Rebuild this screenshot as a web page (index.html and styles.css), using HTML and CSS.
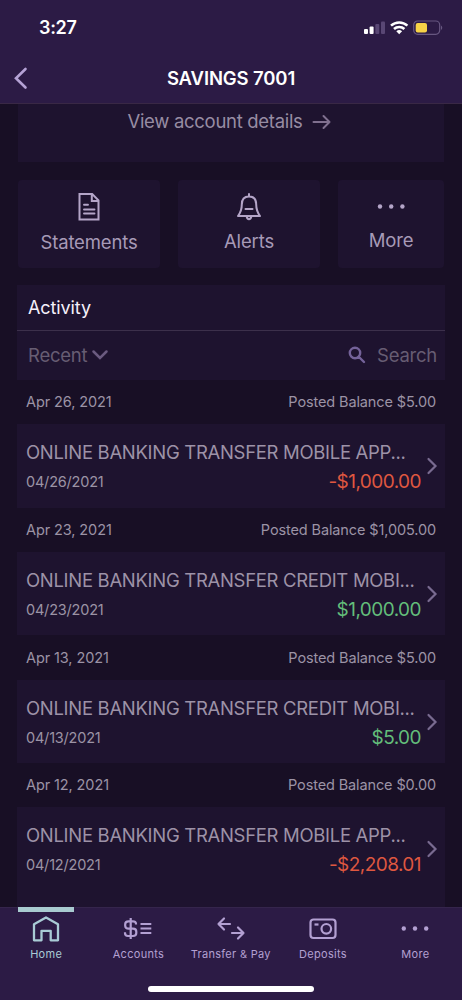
FILE: index.html
```html
<!DOCTYPE html>
<html lang="en">
<head>
<meta charset="utf-8">
<meta name="viewport" content="width=device-width, initial-scale=1">
<title>Savings 7001</title>
<link rel="stylesheet" href="styles.css">
</head>
<body>
<div class="phone">
  <header class="header">
    <div class="status">
      <span class="time">3:27</span>
      <svg class="indicators" width="80" height="16" viewBox="0 0 80 16">
        <g fill="#fff"><rect x="1" y="9" width="4" height="5" rx="1"/><rect x="6.600" y="6.500" width="4" height="7.500" rx="1"/></g>
        <g fill="#594774"><rect x="12.300" y="4" width="4" height="10" rx="1"/><rect x="18" y="1.500" width="4" height="12.500" rx="1"/></g>
        <g fill="none" stroke="#fff" stroke-width="2.500"><path d="M28 5.700a12 12 0 0 1 16.400 0"/><path d="M31 9a7.500 7.500 0 0 1 10.400 0"/></g>
        <path d="M33.300 11.300a4.300 4.300 0 0 1 5.800 0L36.200 14.300z" fill="#fff"/>
        <rect x="50.700" y="1" width="26" height="13.300" rx="4" fill="none" stroke="#675780" stroke-width="1.200"/>
        <rect x="52.700" y="3" width="11.300" height="9.500" rx="2" fill="#f7d347"/>
        <path d="M78 5.500q2.500 2 0 4.500z" fill="#675780"/>
      </svg>
    </div>
    <div class="titlebar">
      <svg class="back" width="16" height="24" viewBox="0 0 16 24"><path d="M12.500 3L3 12.200l9.500 9.300" fill="none" stroke="#b5a2d5" stroke-width="2.600" stroke-linecap="round"/></svg>
      <h1 class="title">SAVINGS 7001</h1>
    </div>
  </header>

  <main class="content">
    <section class="details"><span class="details-text">View account details</span>
      <svg width="20" height="16" viewBox="0 0 20 16"><path d="M1.500 8h16M11.500 2L17.500 8l-6 6" fill="none" stroke="#80708f" stroke-width="2" stroke-linecap="round" stroke-linejoin="round"/></svg>
    </section>

    <div class="actions">
      <div class="action">
        <svg width="24" height="30" viewBox="0 0 24 30" fill="none" stroke="#b4a5c8" stroke-width="2"><path d="M2.500 2h12.700l6.300 6.300V27.500h-19zM14.800 2v7h6.700"/><path d="M7 12.800h4M7 17.500h10.500M7 21.500h10.500" stroke-linecap="round" stroke-width="1.900"/></svg>
        <span class="action-label statements">Statements</span>
      </div>
      <div class="action">
        <svg width="26" height="30" viewBox="0 0 26 30" fill="none" stroke="#b4a5c8" stroke-width="2" stroke-linecap="round" stroke-linejoin="round"><path d="M13 2v2M2 24c3-4 3.800-8 3.800-11.500C5.800 7.500 8.500 4.500 13 4.500s7.200 3 7.200 8C20.200 16 21 20 24 24zM9.500 17h7M10.700 24.500c.5 3.500 4.100 3.500 4.600 0"/></svg>
        <span class="action-label alerts">Alerts</span>
      </div>
      <div class="action action-more">
        <svg width="30" height="30" viewBox="0 0 30 30" fill="#b4a5c8"><circle cx="4" cy="14.500" r="2.200"/><circle cx="15.200" cy="14.500" r="2.200"/><circle cx="26.400" cy="14.500" r="2.200"/></svg>
        <span class="action-label more">More</span>
      </div>
    </div>

    <section class="activity">
      <h2 class="activity-title"><span>Activity</span></h2>
      <div class="filter">
        <span class="recent">Recent</span>
        <svg class="chev-down" width="18" height="12" viewBox="0 0 18 12"><path d="M2.500 2.500L9 9l6.500-6.500" fill="none" stroke="#6b5b80" stroke-width="2.500" stroke-linecap="round"/></svg>
        <svg class="glass" width="18" height="18" viewBox="0 0 18 18"><path d="M11 11l5 5M12.200 7a5.200 5.200 0 1 1-10.400 0 5.200 5.200 0 0 1 10.400 0z" fill="none" stroke="#746299" stroke-width="2.400" stroke-linecap="round"/></svg>
        <span class="search">Search</span>
      </div>

      <div class="day"><span class="date">Apr 26, 2021</span><span class="balance">Posted Balance $5.00</span></div>
      <div class="item">
        <div class="item-name">ONLINE BANKING TRANSFER MOBILE APP...</div>
        <div class="item-row"><span class="item-date">04/26/2021</span><span class="amount debit">-$1,000.00</span></div>
        <svg class="chev" width="12" height="18" viewBox="0 0 12 18"><path d="M2.500 2l7 7-7 7"/></svg>
      </div>
      <div class="day"><span class="date">Apr 23, 2021</span><span class="balance">Posted Balance $1,005.00</span></div>
      <div class="item">
        <div class="item-name">ONLINE BANKING TRANSFER CREDIT MOBI...</div>
        <div class="item-row"><span class="item-date">04/23/2021</span><span class="amount credit">$1,000.00</span></div>
        <svg class="chev" width="12" height="18" viewBox="0 0 12 18"><path d="M2.500 2l7 7-7 7"/></svg>
      </div>
      <div class="day"><span class="date">Apr 13, 2021</span><span class="balance">Posted Balance $5.00</span></div>
      <div class="item">
        <div class="item-name">ONLINE BANKING TRANSFER CREDIT MOBI...</div>
        <div class="item-row"><span class="item-date">04/13/2021</span><span class="amount credit">$5.00</span></div>
        <svg class="chev" width="12" height="18" viewBox="0 0 12 18"><path d="M2.500 2l7 7-7 7"/></svg>
      </div>
      <div class="day"><span class="date">Apr 12, 2021</span><span class="balance">Posted Balance $0.00</span></div>
      <div class="item last">
        <div class="item-name">ONLINE BANKING TRANSFER MOBILE APP...</div>
        <div class="item-row"><span class="item-date">04/12/2021</span><span class="amount debit">-$2,208.01</span></div>
        <svg class="chev" width="12" height="18" viewBox="0 0 12 18"><path d="M2.500 2l7 7-7 7"/></svg>
      </div>
    </section>
  </main>

  <nav class="nav">
    <div class="tabs">
      <div class="tab active">
        <svg width="30" height="30" viewBox="0 0 30 30" fill="none" stroke="#a9cbd5" stroke-width="2.300" stroke-linejoin="round"><path d="M3 9.300L15 2.500l12 6.800V25.300h-7.300v-9.500h-9.200v9.500H3z"/></svg>
        <span>Home</span>
      </div>
      <div class="tab">
        <svg width="30" height="30" viewBox="0 0 30 30" fill="none" stroke="#b3a0d2" stroke-width="2.200"><path d="M13 9.500V8.800C13 6.800 11.800 6.300 10 6.300H5.500C3.500 6.300 2.200 7.300 2.200 9.200v1.500c0 2 1.300 3 3.300 3H10c2 0 3.300 1 3.300 3V18c0 2-1.300 3-3.300 3H5C3 21 2 20 2 18v-.8M7.700 3v21M17.500 9h10.800M17.500 13.500h10.800M17.500 18h10.800"/></svg>
        <span>Accounts</span>
      </div>
      <div class="tab">
        <svg width="30" height="30" viewBox="0 0 30 30" fill="none" stroke="#b3a0d2" stroke-width="2.200" stroke-linecap="round" stroke-linejoin="round"><path d="M8 3.500L2.500 9 8 14.500M2.500 9H14M22 12.500l5.500 5.500-5.500 5.500M27.500 18H16"/></svg>
        <span>Transfer &amp; Pay</span>
      </div>
      <div class="tab">
        <svg width="30" height="30" viewBox="0 0 30 30" fill="none" stroke="#b3a0d2" stroke-width="2.200"><rect x="2.500" y="4.500" width="25" height="18.500" rx="3"/><circle cx="18.300" cy="13.800" r="4.800"/><path d="M6.500 9.500h4"/></svg>
        <span>Deposits</span>
      </div>
      <div class="tab">
        <svg width="30" height="30" viewBox="0 0 30 30" fill="#b3a0d2"><circle cx="3.800" cy="13.500" r="2.200"/><circle cx="15" cy="13.500" r="2.200"/><circle cx="26.200" cy="13.500" r="2.200"/></svg>
        <span>More</span>
      </div>
    </div>
    <div class="home-bar"></div>
  </nav>
</div>
</body>
</html>
```
FILE: styles.css
```css
* { box-sizing: border-box; }
body { margin: 0; background: #180f25; font-family: Inter, "Liberation Sans", sans-serif; }
svg { display: block; flex: none; }
.phone { width: 462px; height: 1000px; display: flex; flex-direction: column; overflow: hidden; background: #180f25; white-space: nowrap; }
.header { flex: none; height: 104px; background: #2c1b45; border-bottom: 1px solid #392845; }
.status { height: 54px; display: flex; justify-content: space-between; padding: 17px 19px 0 39px; color: #fff; }
.time { font-size: 18px; font-weight: 600; line-height: 22px; letter-spacing: -0.300px; }
.indicators { margin-top: 3px; }
.titlebar { position: relative; height: 48px; display: flex; align-items: center; justify-content: center; }
.back { position: absolute; left: 13px; top: 12px; }
.title { margin: 0; font-size: 18.500px; font-weight: 600; color: #fff; letter-spacing: -0.120px; }
.content { flex: 1; min-height: 0; overflow: hidden; }
.details { height: 58px; margin: 0 18px; background: #1e132f; display: flex; justify-content: center; gap: 9px; padding: 5px 3px 0 0; font-size: 18.500px; line-height: 24px; color: #978ca3; }
.details-text { letter-spacing: -0.300px; }
.details svg { margin-top: 5px; }
.actions { display: flex; gap: 18px; margin: 18px 18px 17px; }
.action { width: 142px; height: 88px; border-radius: 4px; background: #1e132f; display: flex; flex-direction: column; align-items: center; padding-top: 12px; }
.action-more { width: 106px; }
.action-label { font-size: 18.500px; line-height: 24px; margin-top: 8px; letter-spacing: -0.150px; color: #a79ab7; }
.alerts { margin-top: 7px; }
.more { margin-top: 6px; }
.activity { margin: 0 17px; }
.activity-title { height: 46px; margin: 0; padding: 0 11px; border-bottom: 1px solid #3c304b; background: #1e132f; font-size: 18px; font-weight: 400; line-height: 45px; letter-spacing: -0.100px; color: #f5f0fa; }
.filter { height: 49px; display: flex; align-items: center; padding: 0 8px 1px 11px; background: #1e132f; font-size: 18.500px; letter-spacing: -0.250px; color: #675d73; }
.chev-down { margin-left: 4px; }
.glass { margin-left: auto; margin-right: 11px; }
.day { height: 44.300px; display: flex; justify-content: space-between; align-items: center; padding: 0 9px 1px; font-size: 14.500px; letter-spacing: -0.100px; color: #9c93a5; }
.balance { letter-spacing: -0.120px; }
.item { position: relative; height: 83.400px; padding: 16px 24px 0 9px; background: #1e132f; }
.item.last { height: 110px; }
.item-name { font-size: 18.500px; line-height: 24px; letter-spacing: -0.310px; color: #9d92a7; }
.item-row { display: flex; justify-content: space-between; align-items: center; line-height: 24px; margin-top: 6px; }
.item-date { font-size: 14.500px; letter-spacing: -0.200px; color: #9c93a5; }
.amount { font-size: 19px; letter-spacing: -0.550px; }
.debit { color: #df5740; }
.credit { color: #63bd7a; }
.chev { position: absolute; right: 7px; top: 33px; fill: none; stroke: #796b90; stroke-width: 2.200; stroke-linecap: round; }
.nav { flex: none; height: 93px; background: #2c1b45; border-top: 1px solid #35254c; }
.tabs { display: flex; height: 81px; }
.tab { position: relative; width: 92.300px; display: flex; flex-direction: column; align-items: center; padding-top: 7px; font-size: 11px; line-height: 16px; letter-spacing: 0.300px; color: #b3a0d2; }
.tab span { margin-top: 1px; }
.tab.active { color: #a9cbd5; }
.tab.active::before { content: ""; position: absolute; left: 18px; top: -1px; width: 56px; height: 5px; background: #a9cbd0; }
.home-bar { width: 166px; height: 6px; margin: -3px auto 0; border-radius: 3px; background: #fff; }
```
